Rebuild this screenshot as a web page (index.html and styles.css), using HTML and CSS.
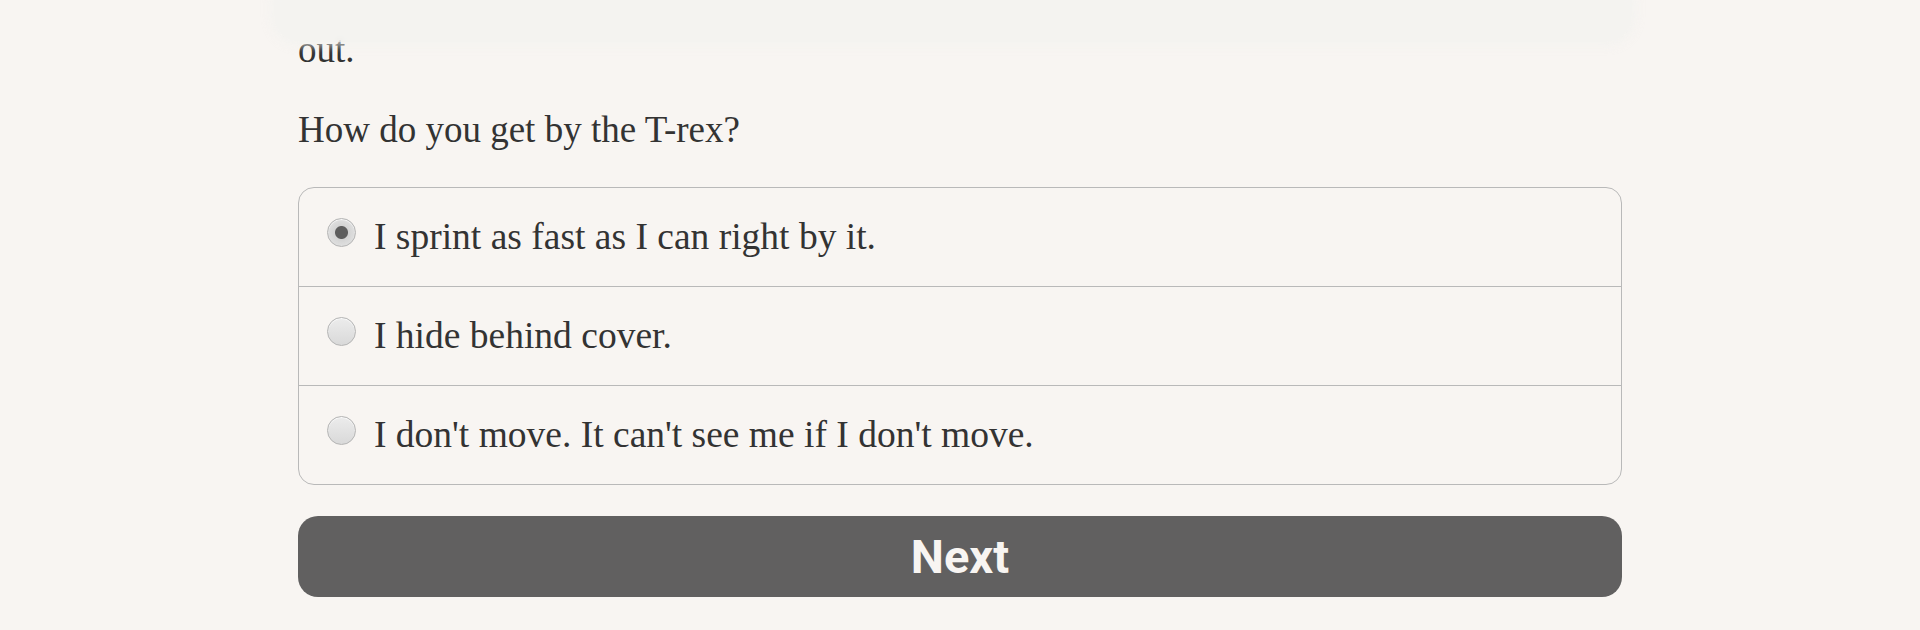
FILE: index.html
```html
<!DOCTYPE html>
<html lang="en">
<head>
  <meta charset="UTF-8" />
  <title>Quiz - T-rex</title>
  <link rel="stylesheet" href="styles.css">
</head>
<body>
  <div class="top-bar"></div>

  <div class="container">
    <p class="story">out.</p>
    <p class="question">How do you get by the T-rex?</p>

    <div class="choices">
      <label class="choice">
        <input type="radio" name="answer" value="sprint" checked />
        <span>I sprint as fast as I can right by it.</span>
      </label>
      <label class="choice">
        <input type="radio" name="answer" value="hide" />
        <span>I hide behind cover.</span>
      </label>
      <label class="choice">
        <input type="radio" name="answer" value="freeze" />
        <span>I don't move. It can't see me if I don't move.</span>
      </label>
    </div>

    <button class="btn">Next</button>
  </div>
</body>
</html>
```

FILE: styles.css
```css
body {
  font-family: "Liberation Serif", "Times New Roman", serif;
  background-color: #f8f5f2;
  color: #333;
  margin: 0;
}

.top-bar {
  position: fixed;
  top: 0;
  left: 274px;
  width: 1358px;
  height: 42px;
  background-color: rgba(242, 242, 240, 0.7);
  border-radius: 0 0 26px 26px;
  box-shadow: 0 0 8px 4px rgba(242, 242, 240, 0.7);
  backdrop-filter: blur(3px);
}

.container {
  max-width: 1324px;
  margin: 0 auto;
  padding-top: 22px;
}

p {
  font-size: 37px;
  line-height: 56px;
  margin: 0;
}

.story {
  margin-bottom: 24px;
}

.question {
  margin-bottom: 29px;
}

.choices {
  border: 1px solid #b9b9b9;
  border-radius: 16px;
}

.choice {
  display: flex;
  align-items: flex-start;
  gap: 18px;
  padding: 21px 28px;
  font-size: 37.5px;
  line-height: 56px;
  cursor: pointer;
}

.choice + .choice {
  border-top: 1px solid #b9b9b9;
}

.choice input {
  appearance: none;
  -webkit-appearance: none;
  width: 29px;
  height: 29px;
  margin: 9px 0 0;
  flex-shrink: 0;
  border: 1px solid #b4b4b4;
  border-radius: 50%;
  background: linear-gradient(#ececec, #d9d9d9);
  box-shadow: inset 0 1px 1px rgba(255, 255, 255, 0.8);
}

.choice input:checked {
  background: radial-gradient(circle, #5e5e5e 0, #5e5e5e 6px, #d4d4d4 7px, #e8e8e8 100%);
}

.btn {
  display: block;
  width: 100%;
  height: 81px;
  margin-top: 31px;
  background-color: #616060;
  color: #f8f5f2;
  border: none;
  border-radius: 20px;
  font-family: Roboto, "Liberation Sans", sans-serif;
  font-weight: bold;
  font-size: 47px;
  cursor: pointer;
}

.btn:hover {
  background-color: #555;
}
```
